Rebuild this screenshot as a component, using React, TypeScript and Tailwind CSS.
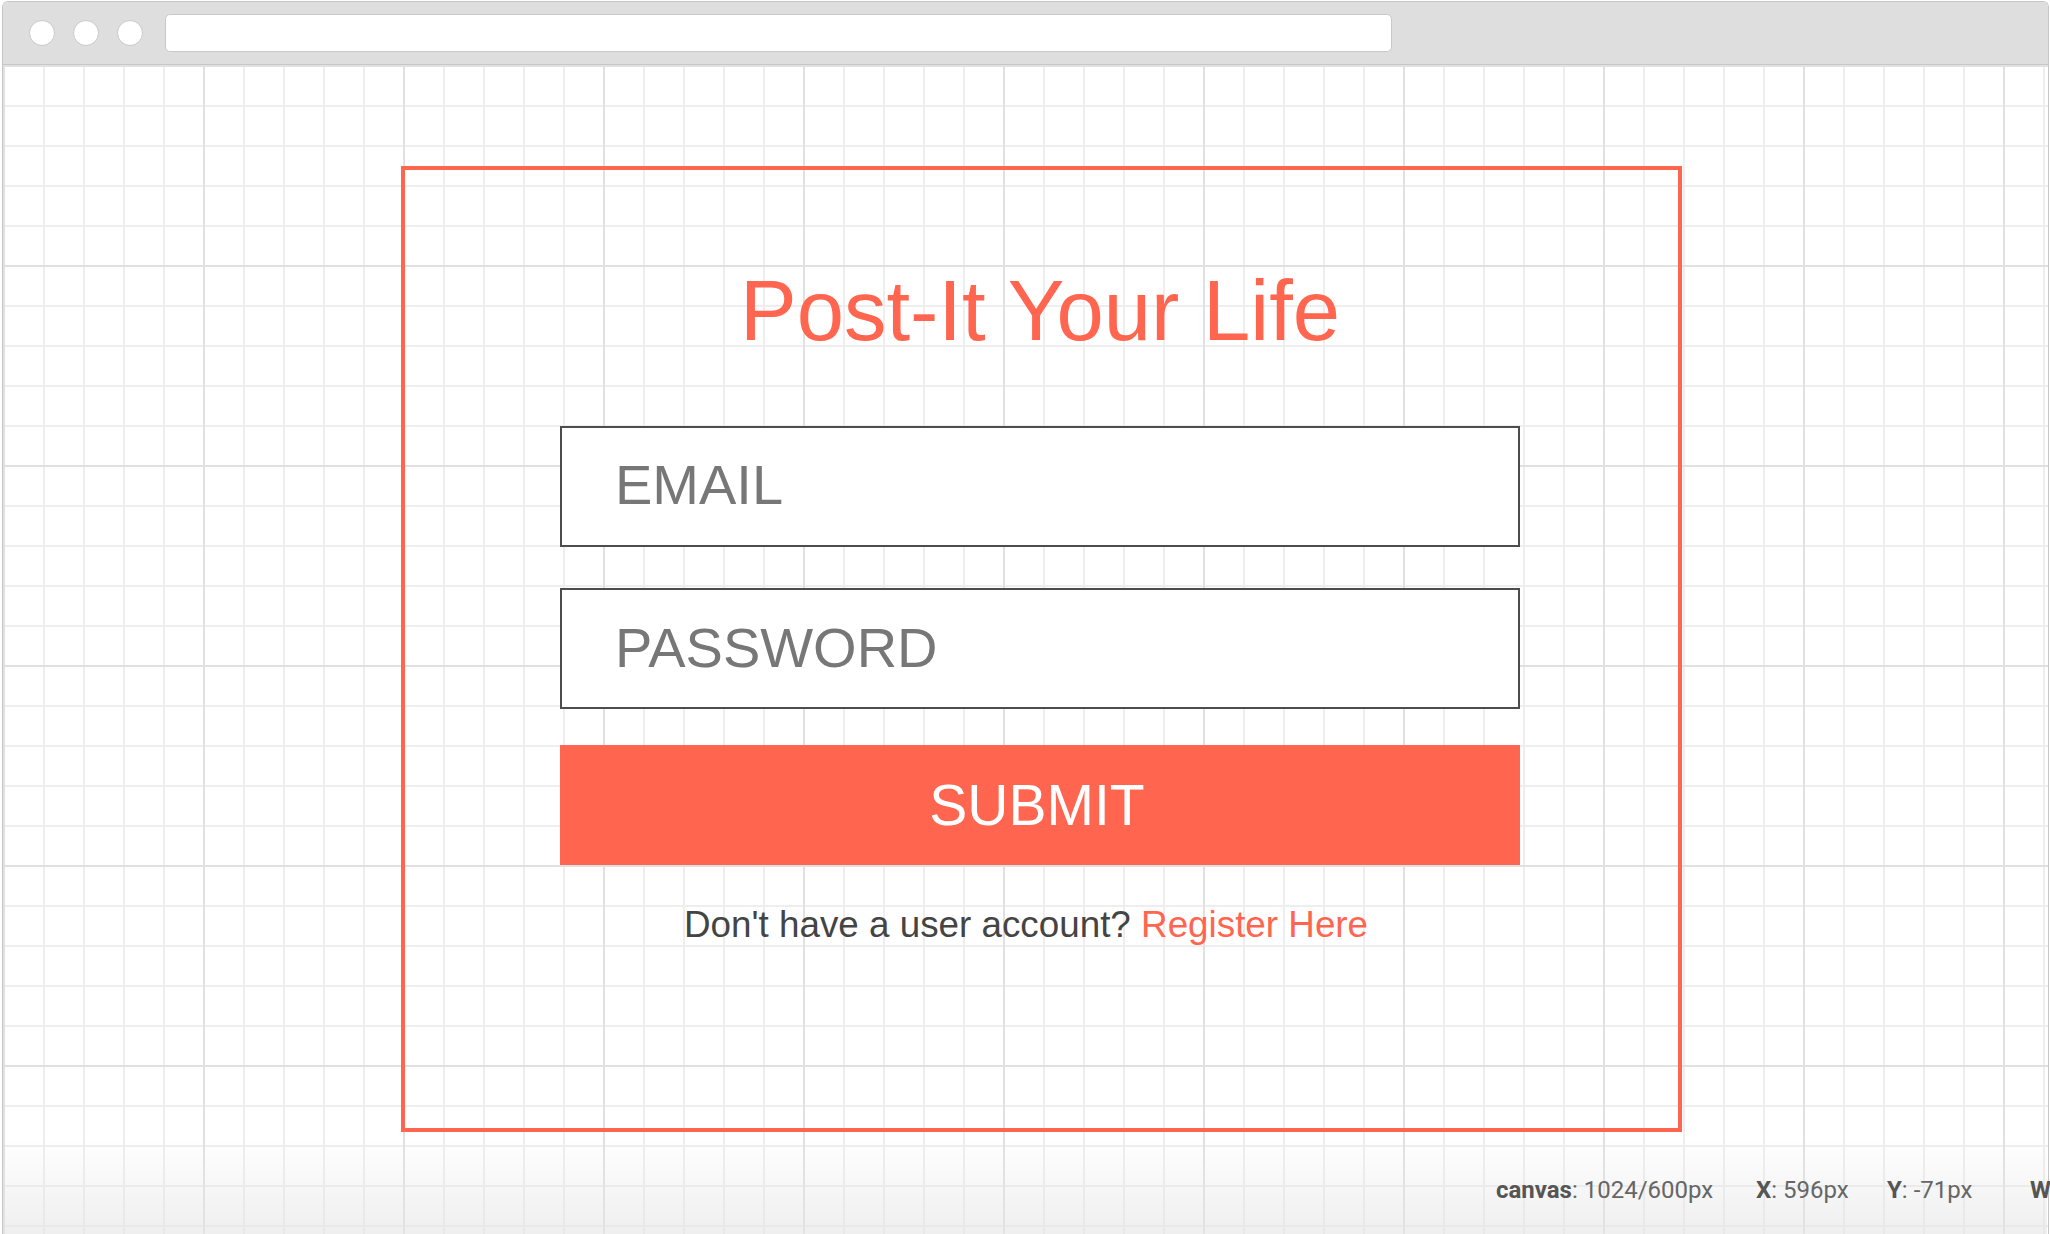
import React from 'react';

const App: React.FC = () => {
  return (
    <div className="relative w-[2050px] h-[1234px] overflow-hidden bg-white font-['Liberation_Sans',Arial,sans-serif]">
      {/* Browser window frame */}
      <div className="ml-[2px] mt-[1px] w-[2047px] h-[1260px] border-x border-t border-[#c6c6c6] rounded-t-[6px] overflow-hidden flex flex-col">
        {/* Top bar */}
        <div className="h-[63px] shrink-0 bg-[#dedede] border-b border-[#c6c6c6] flex items-center pl-[26px]">
          <div className="flex gap-[18px]">
            <span className="w-[26px] h-[26px] rounded-full bg-white border border-[#c9c9c9]" />
            <span className="w-[26px] h-[26px] rounded-full bg-white border border-[#c9c9c9]" />
            <span className="w-[26px] h-[26px] rounded-full bg-white border border-[#c9c9c9]" />
          </div>
          <div className="ml-[22px] w-[1227px] h-[38px] bg-white border border-[#c9c9c9] rounded-[5px]" />
        </div>

        {/* Canvas with grid */}
        <div className="flex-1 [background-image:linear-gradient(to_right,#e1e1e1_2px,transparent_2px),linear-gradient(to_bottom,#e1e1e1_2px,transparent_2px),linear-gradient(to_right,#eeeeee_2px,transparent_2px),linear-gradient(to_bottom,#eeeeee_2px,transparent_2px)] [background-size:200px_200px,200px_200px,40px_40px,40px_40px]">
          {/* Login card */}
          <div className="ml-[398px] mt-[101px] w-[1281px] h-[966px] border-4 border-[#ff654f]">
            <div className="ml-[155px] w-[960px] flex flex-col">
              <h1 className="mt-[98px] text-center text-[85px] leading-none text-[#ff654f]">
                Post-It Your Life
              </h1>
              <input
                type="text"
                placeholder="EMAIL"
                className="mt-[73px] h-[121px] w-full bg-white border-2 border-[#4d4d4d] pl-[53px] pb-[4px] text-[56px] text-[#777] placeholder:text-[#777] outline-none"
              />
              <input
                type="password"
                placeholder="PASSWORD"
                className="mt-[41px] h-[121px] w-full bg-white border-2 border-[#4d4d4d] pl-[53px] pb-[3px] text-[56px] text-[#777] placeholder:text-[#777] outline-none"
              />
              <button className="mt-[36px] h-[120px] w-full bg-[#ff654f] pr-[6px] text-white text-[57px] leading-none">
                SUBMIT
              </button>
              <p className="mt-[42px] pl-[124px] text-[36.8px] leading-none text-[#444]">
                Don't have a user account? <a className="text-[#ff654f]">Register Here</a>
              </p>
            </div>
          </div>
        </div>
      </div>

      {/* Status bar overlay */}
      <div className="absolute left-[3px] right-[3px] bottom-0 h-[96px] bg-linear-to-b from-transparent to-[#e4e4e4]/60" />
      <div className="absolute left-[1496px] top-[1178px] flex whitespace-nowrap text-[24px] leading-none text-[#666] font-['Roboto',sans-serif]">
        <span className="w-[260px]"><b className="font-bold text-[#555]">canvas</b>: 1024/600px</span>
        <span className="w-[131px]"><b className="font-bold text-[#555]">X</b>: 596px</span>
        <span className="w-[143px]"><b className="font-bold text-[#555]">Y</b>: -71px</span>
        <span><b className="font-bold text-[#555]">W</b>: 1024px</span>
      </div>
    </div>
  );
};

export default App;
